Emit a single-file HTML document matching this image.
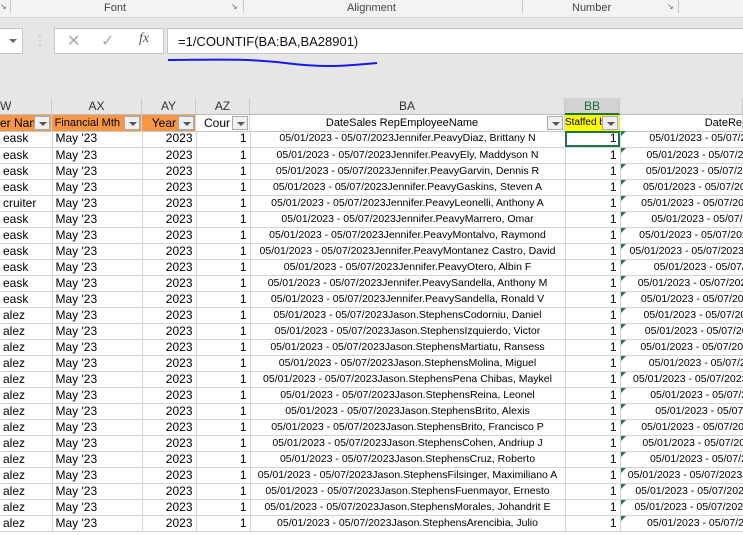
<!DOCTYPE html>
<html><head><meta charset="utf-8"><style>
*{margin:0;padding:0;box-sizing:border-box}
body{width:743px;height:535px;overflow:hidden;position:relative;background:#fff;font-family:"Liberation Sans",Arial,sans-serif}
.a{position:absolute}
.rib{left:0;top:0;width:743px;height:18px;background:#f3f3f3;border-bottom:1px solid #d4d4d4}
.lbl{font-size:11px;color:#444;top:2px}
.grey{left:0;top:18px;width:743px;height:80px;background:#e6e6e6}
.colh{top:98px;height:17px;background:#e6e6e6;border-right:1px solid #c8c8c8;border-bottom:1px solid #bdbdbd;font-size:12px;color:#333;text-align:center;line-height:17px}
.hd{top:115px;height:17px;border-right:1px solid #d4d4d4;border-bottom:1px solid #c4c4c4;font-size:11px;line-height:16px;overflow:hidden;white-space:nowrap}
.dd{position:absolute;right:1px;top:1px;width:16px;height:14px;background:#f0f0f0;border:1px solid #aaa}
.dd:after{content:"";position:absolute;left:4px;top:5px;border-left:4px solid transparent;border-right:4px solid transparent;border-top:4px solid #555}
.wrap{position:absolute;left:0;top:131px;width:743px;height:404px;overflow:hidden}
table{border-collapse:collapse;table-layout:fixed;width:935px}
td{height:16px;border-right:1px solid #d4d4d4;border-bottom:1px solid #d4d4d4;font-size:12px;padding:0 3px;white-space:nowrap;overflow:hidden;line-height:15px;color:#000}
td.ba,td.bc{font-size:10.5px;text-align:center;padding:0}
td.r{text-align:right}
td.bc{position:relative}
.tri{position:absolute;left:0;top:0;border-top:5px solid #1f7a3c;border-right:5px solid transparent}
</style></head><body>
<div class="a rib"></div>
<div class="a lbl" style="left:104px">Font</div>
<div class="a lbl" style="left:347px">Alignment</div>
<div class="a lbl" style="left:572px">Number</div>
<div class="a" style="left:10px;top:0;width:1px;height:13px;background:#c8c8c8"></div>
<div class="a" style="left:243px;top:0;width:1px;height:13px;background:#c8c8c8"></div>
<div class="a" style="left:522px;top:0;width:1px;height:13px;background:#c8c8c8"></div>
<div class="a" style="left:678px;top:0;width:1px;height:13px;background:#c8c8c8"></div>
<div class="a" style="left:0;top:2px;font-size:8px;color:#666">↘</div>
<div class="a" style="left:231px;top:2px;font-size:8px;color:#666">↘</div>
<div class="a" style="left:667px;top:2px;font-size:8px;color:#666">↘</div>
<div class="a grey"></div>
<div class="a" style="left:0;top:28px;width:23px;height:26px;background:#fff;border:1px solid #c6c6c6;border-left:none"></div>
<div class="a" style="left:9px;top:39px;border-left:4px solid transparent;border-right:4px solid transparent;border-top:4px solid #666"></div>
<div class="a" style="left:38px;top:33px;font-size:12px;color:#aaa;line-height:5px">·<br>·<br>·</div>
<div class="a" style="left:54px;top:28px;width:110px;height:26px;background:#fff;border:1px solid #c6c6c6"></div>
<div class="a" style="left:67px;top:31px;font-size:16px;color:#aaa">✕</div>
<div class="a" style="left:101px;top:31px;font-size:16px;color:#aaa">✓</div>
<div class="a" style="left:139px;top:31px;font-size:14px;color:#555;font-family:'Liberation Serif',serif;font-style:italic">fx</div>
<div class="a" style="left:167px;top:28px;width:576px;height:26px;background:#fff;border:1px solid #c6c6c6;border-right:none"></div>
<div class="a" style="left:178px;top:34px;font-size:13px;color:#111">=1/COUNTIF(BA:BA,BA28901)</div>
<svg class="a" style="left:165px;top:55px" width="220" height="15"><path d="M3 5 C40 5,80 3,120 8 S180 11,212 8" stroke="#1a1ae6" stroke-width="2" fill="none"/></svg>

<div class="a colh" style="left:0;width:52px;text-align:left">W</div>
<div class="a colh" style="left:52px;width:90px">AX</div>
<div class="a colh" style="left:142px;width:54px">AY</div>
<div class="a colh" style="left:196px;width:54px">AZ</div>
<div class="a colh" style="left:250px;width:315px">BA</div>
<div class="a colh" style="left:565px;width:55px;background:#d2d2d2;color:#1d6b3a;border-bottom:2px solid #217346">BB</div>
<div class="a colh" style="left:620px;width:123px"></div>

<div class="a hd" style="left:0;width:52px;background:#f79646;font-size:12px">er Name<span class="dd"></span></div>
<div class="a hd" style="left:52px;width:90px;background:#f79646;text-align:right;padding-right:21px;font-size:11px">Financial Mth<span class="dd"></span></div>
<div class="a hd" style="left:142px;width:54px;background:#f79646;text-align:right;padding-right:19px;font-size:12px">Year<span class="dd"></span></div>
<div class="a hd" style="left:196px;width:54px;text-align:right;padding-right:19px;font-size:12px">Cour<span class="dd"></span></div>
<div class="a hd" style="left:250px;width:315px;text-align:center;padding-right:10px">DateSales RepEmployeeName<span class="dd"></span></div>
<div class="a hd" style="left:565px;width:55px;background:#ffff00;font-size:10px">Staffed by<span class="dd"></span></div>
<div class="a hd" style="left:620px;width:123px;text-align:right;padding-right:0">DateRe</div>

<div class="wrap"><table>
<colgroup><col style="width:52px"><col style="width:90px"><col style="width:54px"><col style="width:54px"><col style="width:315px"><col style="width:55px"><col style="width:315px"></colgroup>
<tbody>
<tr><td>eask</td><td>May '23</td><td class="r">2023</td><td class="r">1</td><td class="ba">05/01/2023 - 05/07/2023Jennifer.PeavyDiaz, Brittany N</td><td class="r" style="outline:2px solid #217346;outline-offset:-2px">1</td><td class="bc"><span class="tri"></span>05/01/2023 - 05/07/2023Jennifer.PeavyDiaz, Brittany N</td></tr>
<tr><td>eask</td><td>May '23</td><td class="r">2023</td><td class="r">1</td><td class="ba">05/01/2023 - 05/07/2023Jennifer.PeavyEly, Maddyson N</td><td class="r">1</td><td class="bc"><span class="tri"></span>05/01/2023 - 05/07/2023Jennifer.PeavyEly, Maddyson N</td></tr>
<tr><td>eask</td><td>May '23</td><td class="r">2023</td><td class="r">1</td><td class="ba">05/01/2023 - 05/07/2023Jennifer.PeavyGarvin, Dennis R</td><td class="r">1</td><td class="bc"><span class="tri"></span>05/01/2023 - 05/07/2023Jennifer.PeavyGarvin, Dennis R</td></tr>
<tr><td>eask</td><td>May '23</td><td class="r">2023</td><td class="r">1</td><td class="ba">05/01/2023 - 05/07/2023Jennifer.PeavyGaskins, Steven A</td><td class="r">1</td><td class="bc"><span class="tri"></span>05/01/2023 - 05/07/2023Jennifer.PeavyGaskins, Steven A</td></tr>
<tr><td>cruiter</td><td>May '23</td><td class="r">2023</td><td class="r">1</td><td class="ba">05/01/2023 - 05/07/2023Jennifer.PeavyLeonelli, Anthony A</td><td class="r">1</td><td class="bc"><span class="tri"></span>05/01/2023 - 05/07/2023Jennifer.PeavyLeonelli, Anthony A</td></tr>
<tr><td>eask</td><td>May '23</td><td class="r">2023</td><td class="r">1</td><td class="ba">05/01/2023 - 05/07/2023Jennifer.PeavyMarrero, Omar</td><td class="r">1</td><td class="bc"><span class="tri"></span>05/01/2023 - 05/07/2023Jennifer.PeavyMarrero, Omar</td></tr>
<tr><td>eask</td><td>May '23</td><td class="r">2023</td><td class="r">1</td><td class="ba">05/01/2023 - 05/07/2023Jennifer.PeavyMontalvo, Raymond</td><td class="r">1</td><td class="bc"><span class="tri"></span>05/01/2023 - 05/07/2023Jennifer.PeavyMontalvo, Raymond</td></tr>
<tr><td>eask</td><td>May '23</td><td class="r">2023</td><td class="r">1</td><td class="ba">05/01/2023 - 05/07/2023Jennifer.PeavyMontanez Castro, David</td><td class="r">1</td><td class="bc"><span class="tri"></span>05/01/2023 - 05/07/2023Jennifer.PeavyMontanez Castro, David</td></tr>
<tr><td>eask</td><td>May '23</td><td class="r">2023</td><td class="r">1</td><td class="ba">05/01/2023 - 05/07/2023Jennifer.PeavyOtero, Albin F</td><td class="r">1</td><td class="bc"><span class="tri"></span>05/01/2023 - 05/07/2023Jennifer.PeavyOtero, Albin F</td></tr>
<tr><td>eask</td><td>May '23</td><td class="r">2023</td><td class="r">1</td><td class="ba">05/01/2023 - 05/07/2023Jennifer.PeavySandella, Anthony M</td><td class="r">1</td><td class="bc"><span class="tri"></span>05/01/2023 - 05/07/2023Jennifer.PeavySandella, Anthony M</td></tr>
<tr><td>eask</td><td>May '23</td><td class="r">2023</td><td class="r">1</td><td class="ba">05/01/2023 - 05/07/2023Jennifer.PeavySandella, Ronald V</td><td class="r">1</td><td class="bc"><span class="tri"></span>05/01/2023 - 05/07/2023Jennifer.PeavySandella, Ronald V</td></tr>
<tr><td>alez</td><td>May '23</td><td class="r">2023</td><td class="r">1</td><td class="ba">05/01/2023 - 05/07/2023Jason.StephensCodorniu, Daniel</td><td class="r">1</td><td class="bc"><span class="tri"></span>05/01/2023 - 05/07/2023Jason.StephensCodorniu, Daniel</td></tr>
<tr><td>alez</td><td>May '23</td><td class="r">2023</td><td class="r">1</td><td class="ba">05/01/2023 - 05/07/2023Jason.StephensIzquierdo, Victor</td><td class="r">1</td><td class="bc"><span class="tri"></span>05/01/2023 - 05/07/2023Jason.StephensIzquierdo, Victor</td></tr>
<tr><td>alez</td><td>May '23</td><td class="r">2023</td><td class="r">1</td><td class="ba">05/01/2023 - 05/07/2023Jason.StephensMartiatu, Ransess</td><td class="r">1</td><td class="bc"><span class="tri"></span>05/01/2023 - 05/07/2023Jason.StephensMartiatu, Ransess</td></tr>
<tr><td>alez</td><td>May '23</td><td class="r">2023</td><td class="r">1</td><td class="ba">05/01/2023 - 05/07/2023Jason.StephensMolina, Miguel</td><td class="r">1</td><td class="bc"><span class="tri"></span>05/01/2023 - 05/07/2023Jason.StephensMolina, Miguel</td></tr>
<tr><td>alez</td><td>May '23</td><td class="r">2023</td><td class="r">1</td><td class="ba">05/01/2023 - 05/07/2023Jason.StephensPena Chibas, Maykel</td><td class="r">1</td><td class="bc"><span class="tri"></span>05/01/2023 - 05/07/2023Jason.StephensPena Chibas, Maykel</td></tr>
<tr><td>alez</td><td>May '23</td><td class="r">2023</td><td class="r">1</td><td class="ba">05/01/2023 - 05/07/2023Jason.StephensReina, Leonel</td><td class="r">1</td><td class="bc"><span class="tri"></span>05/01/2023 - 05/07/2023Jason.StephensReina, Leonel</td></tr>
<tr><td>alez</td><td>May '23</td><td class="r">2023</td><td class="r">1</td><td class="ba">05/01/2023 - 05/07/2023Jason.StephensBrito, Alexis</td><td class="r">1</td><td class="bc"><span class="tri"></span>05/01/2023 - 05/07/2023Jason.StephensBrito, Alexis</td></tr>
<tr><td>alez</td><td>May '23</td><td class="r">2023</td><td class="r">1</td><td class="ba">05/01/2023 - 05/07/2023Jason.StephensBrito, Francisco P</td><td class="r">1</td><td class="bc"><span class="tri"></span>05/01/2023 - 05/07/2023Jason.StephensBrito, Francisco P</td></tr>
<tr><td>alez</td><td>May '23</td><td class="r">2023</td><td class="r">1</td><td class="ba">05/01/2023 - 05/07/2023Jason.StephensCohen, Andriup J</td><td class="r">1</td><td class="bc"><span class="tri"></span>05/01/2023 - 05/07/2023Jason.StephensCohen, Andriup J</td></tr>
<tr><td>alez</td><td>May '23</td><td class="r">2023</td><td class="r">1</td><td class="ba">05/01/2023 - 05/07/2023Jason.StephensCruz, Roberto</td><td class="r">1</td><td class="bc"><span class="tri"></span>05/01/2023 - 05/07/2023Jason.StephensCruz, Roberto</td></tr>
<tr><td>alez</td><td>May '23</td><td class="r">2023</td><td class="r">1</td><td class="ba">05/01/2023 - 05/07/2023Jason.StephensFilsinger, Maximiliano A</td><td class="r">1</td><td class="bc"><span class="tri"></span>05/01/2023 - 05/07/2023Jason.StephensFilsinger, Maximiliano A</td></tr>
<tr><td>alez</td><td>May '23</td><td class="r">2023</td><td class="r">1</td><td class="ba">05/01/2023 - 05/07/2023Jason.StephensFuenmayor, Ernesto</td><td class="r">1</td><td class="bc"><span class="tri"></span>05/01/2023 - 05/07/2023Jason.StephensFuenmayor, Ernesto</td></tr>
<tr><td>alez</td><td>May '23</td><td class="r">2023</td><td class="r">1</td><td class="ba">05/01/2023 - 05/07/2023Jason.StephensMorales, Johandrit E</td><td class="r">1</td><td class="bc"><span class="tri"></span>05/01/2023 - 05/07/2023Jason.StephensMorales, Johandrit E</td></tr>
<tr><td>alez</td><td>May '23</td><td class="r">2023</td><td class="r">1</td><td class="ba">05/01/2023 - 05/07/2023Jason.StephensArencibia, Julio</td><td class="r">1</td><td class="bc"><span class="tri"></span>05/01/2023 - 05/07/2023Jason.StephensArencibia, Julio</td></tr>
</tbody></table></div>
</body></html>
